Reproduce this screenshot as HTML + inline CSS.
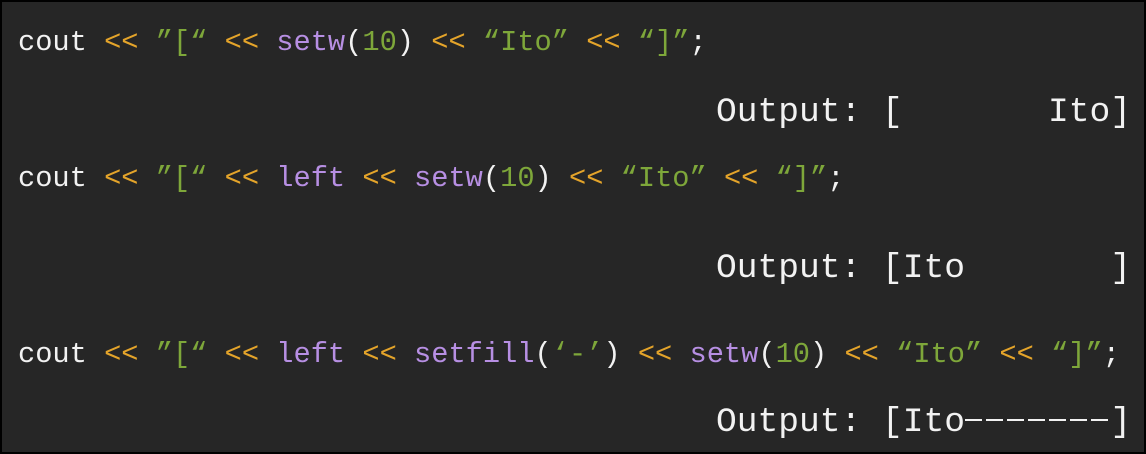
<!DOCTYPE html><html><head><style>
html,body{margin:0;padding:0}
body{width:1146px;height:454px;background:#000;position:relative;overflow:hidden}
.bg{position:absolute;left:2px;top:2px;right:2px;bottom:2px;background:#262626}
.l{position:absolute;font-family:"Liberation Mono",monospace;white-space:pre;color:#f2f2f2;line-height:1}
.c{font-size:28.7px;left:18px}
.o{font-size:34.6px;left:716px}
.k{color:#e4a42a}.s{color:#7ea73a}.f{color:#b78fe3}
.d{display:inline-block;width:4.2em;height:2px;vertical-align:0.3em;background:repeating-linear-gradient(90deg,#f2f2f2 0 17px,transparent 17px 21px)}
</style></head><body><div class="bg"></div>
<div class="l c" style="top:29px">cout <span class="k">&lt;&lt;</span> <span class="s">”[“</span> <span class="k">&lt;&lt;</span> <span class="f">setw</span>(<span class="s">10</span>) <span class="k">&lt;&lt;</span> <span class="s">“Ito”</span> <span class="k">&lt;&lt;</span> <span class="s">“]”</span>;</div>
<div class="l o" style="top:96px">Output: [       Ito]</div>
<div class="l c" style="top:165px">cout <span class="k">&lt;&lt;</span> <span class="s">”[“</span> <span class="k">&lt;&lt;</span> <span class="f">left</span> <span class="k">&lt;&lt;</span> <span class="f">setw</span>(<span class="s">10</span>) <span class="k">&lt;&lt;</span> <span class="s">“Ito”</span> <span class="k">&lt;&lt;</span> <span class="s">“]”</span>;</div>
<div class="l o" style="top:252px">Output: [Ito       ]</div>
<div class="l c" style="top:341px">cout <span class="k">&lt;&lt;</span> <span class="s">”[“</span> <span class="k">&lt;&lt;</span> <span class="f">left</span> <span class="k">&lt;&lt;</span> <span class="f">setfill</span>(<span class="s">‘-’</span>) <span class="k">&lt;&lt;</span> <span class="f">setw</span>(<span class="s">10</span>) <span class="k">&lt;&lt;</span> <span class="s">“Ito”</span> <span class="k">&lt;&lt;</span> <span class="s">“]”</span>;</div>
<div class="l o" style="top:406px">Output: [Ito<span class="d"></span>]</div>
</body></html>
